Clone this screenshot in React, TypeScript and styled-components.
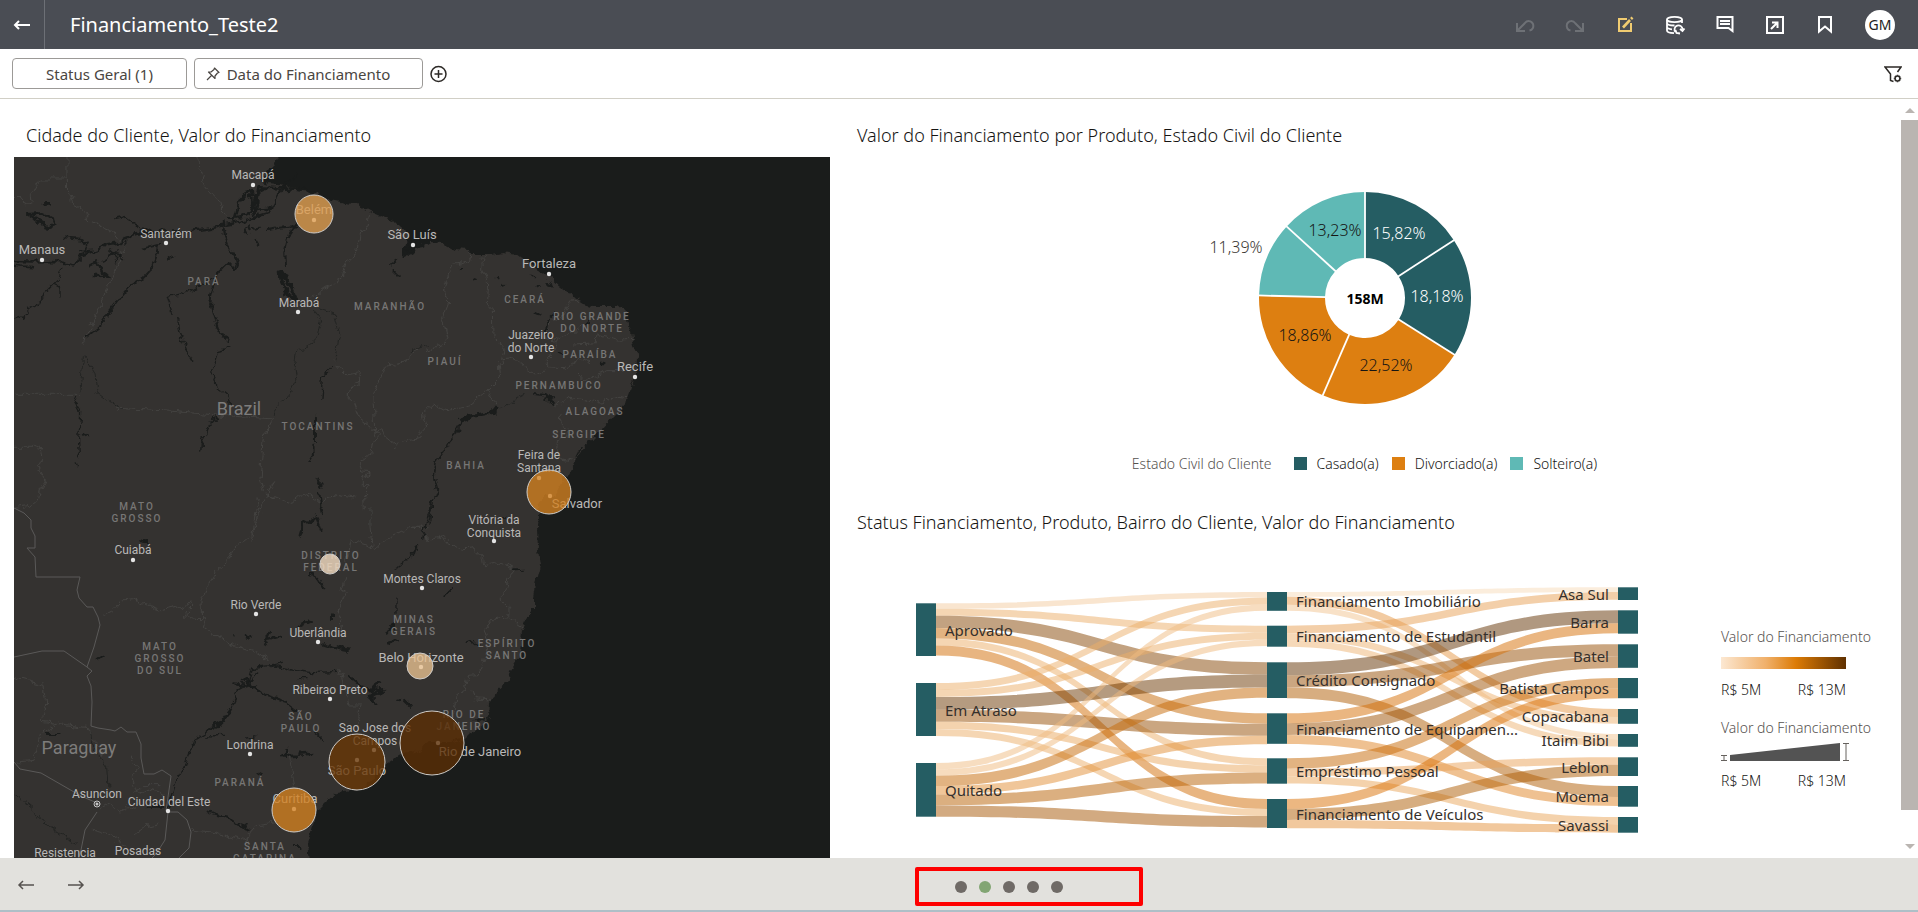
import React from "react";
import styled, { createGlobalStyle } from "styled-components";

const GlobalStyle = createGlobalStyle`
  * { box-sizing: border-box; }
  html, body, #root { height: 100%; }
  body {
    margin: 0;
    background: #fff;
    color: #161513;
    font-family: "Noto Sans", "Open Sans", sans-serif;
    font-size: 14px;
    font-weight: 300;
    overflow: hidden;
  }
  button { font: inherit; color: inherit; cursor: pointer; }
`;

const Page = styled.div`
  display: flex;
  flex-direction: column;
  height: 100vh;
  min-height: 600px;
`;

/* ---------- Header ---------- */

const Header = styled.header`
  display: flex;
  align-items: center;
  flex: none;
  height: 49px;
  padding-right: 23px;
  background: #4a4d54;
  color: #fff;
`;

const BackButton = styled.button`
  display: grid;
  place-items: center;
  width: 45px;
  height: 49px;
  padding: 0;
  border: 0;
  border-right: 1px solid #6d7076;
  background: none;
`;

const ProjectTitle = styled.h1`
  flex: 1;
  margin: 0;
  padding-left: 25px;
  font-size: 20px;
  font-weight: 400;
  line-height: 24px;
`;

const HeaderTools = styled.div`
  display: flex;
  align-items: center;
`;

const ToolButton = styled.button<{ $tone?: string }>`
  display: grid;
  place-items: center;
  width: 50px;
  height: 48px;
  padding: 0;
  border: 0;
  background: none;
  color: ${(p) => p.$tone ?? "#fff"};
`;

const Avatar = styled.button`
  width: 30px;
  height: 30px;
  margin-left: 15px;
  padding: 0;
  border: 0;
  border-radius: 50%;
  background: #fff;
  color: #222;
  font-size: 14px;
  font-weight: 400;
  line-height: 30px;
`;

/* ---------- Filter bar ---------- */

const FilterBar = styled.div`
  display: flex;
  align-items: center;
  flex: none;
  height: 50px;
  padding: 0 16px 0 12px;
  border-bottom: 1px solid #d1cfc6;
`;

const FilterChip = styled.button<{ $width: number }>`
  display: flex;
  align-items: center;
  justify-content: center;
  gap: 6px;
  width: ${(p) => p.$width}px;
  height: 31px;
  margin-right: 7px;
  padding: 0 22px 0 0;
  border: 1px solid #9c9a97;
  border-radius: 4px;
  background: #fff;
  color: #4a4642;
  font-size: 15px;
  font-weight: 400;
  line-height: 20px;
  &:first-child { padding-right: 0; }
`;

const IconButton = styled.button`
  display: grid;
  place-items: center;
  width: 18px;
  height: 24px;
  padding: 0;
  border: 0;
  background: none;
  color: #2c2926;
`;

const Spacer = styled.div`
  flex: 1;
`;

/* ---------- Canvas ---------- */

const Body = styled.main`
  display: flex;
  flex: 1;
  min-height: 0;
`;

const Canvas = styled.div`
  display: grid;
  flex: 1;
  grid-template-columns: 816fr 1015fr;
  gap: 27px;
  min-width: 0;
  padding: 25px 29px 0 14px;
  overflow: hidden;
`;

const Column = styled.div`
  display: flex;
  flex-direction: column;
  min-width: 0;
  min-height: 0;
`;

const CardTitle = styled.h2<{ $indent?: boolean }>`
  flex: none;
  margin: 0;
  padding: 0 0 2px ${(p) => (p.$indent ? 12 : 0)}px;
  font-size: 18px;
  font-weight: 300;
  line-height: 22px;
`;

const MapFrame = styled.div`
  flex: 1;
  min-height: 0;
  margin-top: 9px;
  background: #1a1c1b;
`;

const MapSvg = styled.svg`
  display: block;
  width: 100%;
  height: 100%;
`;

const CityText = styled.text<{ $large?: boolean }>`
  font-family: Roboto, sans-serif;
  font-size: ${(p) => (p.$large ? 13 : 12)}px;
  font-weight: 400;
  fill: #b9b8b7;
  text-anchor: middle;
`;

const StateText = styled.text`
  font-family: Roboto, sans-serif;
  font-size: 10px;
  font-weight: 500;
  letter-spacing: 2px;
  fill: #777675;
  text-anchor: middle;
`;

const CountryText = styled.text`
  font-family: Roboto, sans-serif;
  font-size: 18px;
  font-weight: 400;
  fill: #7d7c7b;
  text-anchor: middle;
`;

/* ---------- Donut ---------- */

const DonutSvg = styled.svg`
  display: block;
  flex: none;
  width: 100%;
  height: 300px;
`;

const SliceText = styled.text<{ $tone: string }>`
  font-size: 16px;
  fill: ${(p) => p.$tone};
  text-anchor: middle;
`;

const TotalText = styled.text`
  font-size: 14px;
  font-weight: 700;
  text-anchor: middle;
`;

const Legend = styled.div`
  display: flex;
  align-items: center;
  justify-content: center;
  gap: 13px;
  flex: none;
  height: 30px;
  margin-bottom: 33px;
  font-size: 14px;
`;

const LegendTitle = styled.span`
  margin-right: 9px;
  color: #56524f;
`;

const LegendItem = styled.span<{ $color: string }>`
  display: flex;
  align-items: center;
  gap: 10px;
  &::before {
    content: "";
    width: 13px;
    height: 13px;
    background: ${(p) => p.$color};
  }
`;

/* ---------- Sankey ---------- */

const SankeyRow = styled.div`
  display: flex;
  flex: 1;
  min-height: 0;
`;

const SankeySvg = styled.svg`
  flex: 1;
  min-width: 0;
  height: 323px;
`;

const NodeText = styled.text<{ $end?: boolean }>`
  font-size: 15px;
  font-weight: 400;
  fill: #35302c;
  text-anchor: ${(p) => (p.$end ? "end" : "start")};
`;

const Scales = styled.div`
  flex: none;
  width: 151px;
  padding-top: 92px;
  font-size: 14px;
  white-space: nowrap;
`;

const ScaleTitle = styled.div`
  height: 20px;
  color: #56524f;
  line-height: 20px;
`;

const ColorRamp = styled.div`
  width: 125px;
  height: 12px;
  margin: 10px 0 11px;
  background: linear-gradient(to right, #fce8d2, #f0b06a 36%, #dc7b05 60%, #5f3000);
`;

const SizeRamp = styled.svg`
  display: block;
  width: 129px;
  height: 18px;
  margin: 5px 0 10px;
`;

const ScaleEnds = styled.div`
  display: flex;
  justify-content: space-between;
  width: 125px;
  height: 20px;
  margin-bottom: 18px;
  line-height: 20px;
`;

/* ---------- Scrollbar ---------- */

const Scrollbar = styled.div`
  display: flex;
  flex-direction: column;
  align-items: center;
  flex: none;
  width: 17px;
  padding: 9px 0;
`;

const ScrollThumb = styled.div`
  flex: 1;
  width: 17px;
  margin: 7px 0 34px;
  background: #bab5b1;
`;

const ScrollArrow = styled.span<{ $down?: boolean }>`
  border: 5px solid transparent;
  border-${(p) => (p.$down ? "bottom" : "top")}-width: 0;
  border-${(p) => (p.$down ? "top" : "bottom")}-color: #bab5b1;
`;

/* ---------- Footer ---------- */

const Footer = styled.footer`
  display: grid;
  grid-template-columns: 915fr 228px 775fr;
  align-items: center;
  flex: none;
  height: 54px;
  background: #e2e1dd;
  border-bottom: 2px solid #aebfc7;
`;

const StepButtons = styled.div`
  display: flex;
  padding: 2px 0 0 9px;
`;

const StepButton = styled.button`
  display: grid;
  place-items: center;
  width: 34px;
  height: 34px;
  margin-right: 16px;
  padding: 0;
  border: 0;
  background: none;
  color: #56524f;
`;

const CanvasDots = styled.nav`
  display: flex;
  align-items: center;
  gap: 12px;
  height: 39px;
  margin-top: 4px;
  padding: 2px 0 0 36px;
  border: 4px solid #fe0000;
  border-radius: 2px;
`;

const Dot = styled.button<{ $active?: boolean }>`
  width: 12px;
  height: 12px;
  padding: 0;
  border: 0;
  border-radius: 50%;
  background: ${(p) => (p.$active ? "#82a573" : "#6f6a66")};
`;

/* ---------- Icons ---------- */

type IconProps = { size?: number; sw?: number; children: React.ReactNode };

const Icon = ({ size = 24, sw = 2, children }: IconProps) => (
  <svg width={size} height={size} viewBox={`0 0 ${size} ${size}`} fill="none" stroke="currentColor" strokeWidth={sw} aria-hidden="true">
    {children}
  </svg>
);

const ArrowLeft = ({ sw = 2 }: { sw?: number }) => (
  <Icon size={18} sw={sw}>
    <path d="M17 9H2M6 5L2 9l4 4" />
  </Icon>
);

const ArrowRight = ({ sw = 2 }: { sw?: number }) => (
  <Icon size={18} sw={sw}>
    <path d="M1 9h15M12 5l4 4-4 4" />
  </Icon>
);

/* ---------- Map data ---------- */

type Place = { lines: string[]; x: number; y: number; large?: boolean; dot?: [number, number] };

const cities: Place[] = [
  { lines: ["Macapá"], x: 253, y: 179, dot: [253, 185] },
  { lines: ["Manaus"], x: 42, y: 254, large: true, dot: [42, 260] },
  { lines: ["Santarém"], x: 166, y: 238, dot: [166, 243] },
  { lines: ["Belém"], x: 314, y: 214, large: true, dot: [314, 220] },
  { lines: ["Marabá"], x: 299, y: 307, dot: [298, 312] },
  { lines: ["São Luís"], x: 412, y: 239, large: true, dot: [413, 245] },
  { lines: ["Fortaleza"], x: 549, y: 268, large: true, dot: [549, 274] },
  { lines: ["Juazeiro", "do Norte"], x: 531, y: 339, dot: [531, 357] },
  { lines: ["Recife"], x: 635, y: 371, large: true, dot: [635, 377] },
  { lines: ["Feira de", "Santana"], x: 539, y: 459, dot: [539, 478] },
  { lines: ["Salvador"], x: 577, y: 508, large: true, dot: [550, 496] },
  { lines: ["Vitória da", "Conquista"], x: 494, y: 524, dot: [494, 541] },
  { lines: ["Montes Claros"], x: 422, y: 583, dot: [422, 588] },
  { lines: ["Belo Horizonte"], x: 421, y: 662, large: true, dot: [421, 667] },
  { lines: ["Rio de Janeiro"], x: 480, y: 756, large: true, dot: [438, 743] },
  { lines: ["Cuiabá"], x: 133, y: 554, dot: [133, 560] },
  { lines: ["Rio Verde"], x: 256, y: 609, dot: [256, 614] },
  { lines: ["Uberlândia"], x: 318, y: 637, dot: [318, 642] },
  { lines: ["Ribeirao Preto"], x: 330, y: 694, dot: [330, 699] },
  { lines: ["Sao Jose dos", "Campos"], x: 375, y: 732, dot: [374, 750] },
  { lines: ["São Paulo"], x: 357, y: 775, large: true, dot: [357, 760] },
  { lines: ["Londrina"], x: 250, y: 749, dot: [250, 754] },
  { lines: ["Curitiba"], x: 295, y: 803, large: true, dot: [294, 809] },
  { lines: ["Asuncion"], x: 97, y: 798 },
  { lines: ["Ciudad del Este"], x: 169, y: 806, dot: [168, 811] },
  { lines: ["Resistencia"], x: 65, y: 857 },
  { lines: ["Posadas"], x: 138, y: 855 },
];

const states: Place[] = [
  { lines: ["PARÁ"], x: 204, y: 285 },
  { lines: ["MARANHÃO"], x: 390, y: 310 },
  { lines: ["CEARÁ"], x: 525, y: 303 },
  { lines: ["RIO GRANDE", "DO NORTE"], x: 592, y: 320 },
  { lines: ["PARAÍBA"], x: 590, y: 358 },
  { lines: ["PIAUÍ"], x: 445, y: 365 },
  { lines: ["PERNAMBUCO"], x: 559, y: 389 },
  { lines: ["ALAGOAS"], x: 595, y: 415 },
  { lines: ["SERGIPE"], x: 579, y: 438 },
  { lines: ["TOCANTINS"], x: 318, y: 430 },
  { lines: ["BAHIA"], x: 466, y: 469 },
  { lines: ["MATO", "GROSSO"], x: 137, y: 510 },
  { lines: ["MATO", "GROSSO", "DO SUL"], x: 160, y: 650 },
  { lines: ["DISTRITO", "FEDERAL"], x: 331, y: 559 },
  { lines: ["MINAS", "GERAIS"], x: 414, y: 623 },
  { lines: ["ESPÍRITO", "SANTO"], x: 507, y: 647 },
  { lines: ["SÃO", "PAULO"], x: 301, y: 720 },
  { lines: ["RIO DE", "JANEIRO"], x: 464, y: 718 },
  { lines: ["PARANÁ"], x: 240, y: 786 },
  { lines: ["SANTA", "CATARINA"], x: 265, y: 850 },
];

const bubbles = [
  { x: 314, y: 214, r: 19, color: "#e19f50" },
  { x: 549, y: 492, r: 22, color: "#d58120" },
  { x: 330, y: 564, r: 10, color: "#fae2c7" },
  { x: 420, y: 666, r: 13, color: "#ebc392" },
  { x: 432, y: 743, r: 32, color: "#5c2e04" },
  { x: 357, y: 762, r: 28, color: "#6a3705" },
  { x: 294, y: 810, r: 22, color: "#d58120" },
];

const LAND =
  "M0 140H290L278 157 275 165 268 172 262 182 268 184 285 186 300 190 315 193 330 200 345 203 357 205 368 211 380 216 393 220 402 229 409 234 404 246 404 256 410 254 414 248 424 246 430 242 442 243 453 249 470 250 473 254 490 254 503 252 517 254 525 260 538 268 549 277 560 287 578 299 582 303 592 306 617 306 623 308 627 317 631 332 633 342 637 357 636 370 633 383 628 397 620 410 612 418 603 428 593 437 585 447 577 458 567 477 561 486 553 498 546 496 540 503 538 515 537 527 538 550 540 565 536 580 533 597 533 612 525 622 521 632 520 643 518 658 510 670 507 682 496 692 490 702 489 718 482 727 470 733 463 740 450 742 430 742 415 752 400 755 387 763 377 775 360 789 337 792 325 802 315 812 313 825 308 843 312 880H0Z";

/* Line work is drawn in four map tiles at three units per pixel. */
const tiles = [
  {
    at: "translate(0 150) scale(.3333)",
    borders: [
      "M42 142l12 1 20 22 20-8-3-20 28-50h82v-66M202 87l1 40 13 20 2 14 30 22 8 4 10 22 40 20 35 14 15 24 14 14 7 14-130 288M590 21l3 20 20 30-5 24 20 26 30 32 5 18 25 26M1108 190l-3 40-22 15-14 60-32 40-10 36-30 25-25 8-40 30M42 733H235M40 892l60 0 25 8 3 25-14 30 24 38-20 30-6 28-20 18-52 6M350 775l150 8 150 12 170 12-30 60-10 120 12 40 20 12 60 25 40-35 50 30 40-25 60 10M1000 630l40 45 40-8 2 30-30 10-5 38 15 14 20 50 45 35 15 10-20 24-6 30-40 30 10 28 24 2-20 12v30l18 0-14 25 2 45M1125 855l-6-115 35-90 70-18 26-34M1125 855l20-25 10 30 34 28 36-20 36-5M780 1080l20-45 24-40-14 16",
    ],
    rivers: [
      { d: "M0 325l40 8 60 2 60-2 60 10 22-10 0-16 50-16 20-14 40-6 20-16 40-14 45-1 30-14 20 12 50-3 70-10 40-8 40-8 50-16 50-14 35-60 20-34 24-24", w: 7 },
      { d: "M0 340l60 8 40 2M195 265l42 4 24 14-6 22M330 300l24 20-10 18M310 330l42-24 18 24M240 305l40-4M345 205l26-6 34 24 16 20 60 4M370 282l20-24 30-12M520 320l-14 6M430 295l60-14", w: 5 },
      { d: "M690 206l60-14 16-40 10-40 80 4 90 10M700 212l14-50 34-44M752 118l12 74M775 130l-8 60M767 180l50-4M745 142l46-22", w: 8 },
      { d: "M474 282l-6 40-14 36-26 28-40 24-30 34-30 40-24 42-34 26-12 10", w: 6 },
      { d: "M668 216l8 44 12 36 28 34-12 30-22-22-26 26-16 44-10 50 10 36 14 40 28 42", w: 6 },
      { d: "M650 382l-50 24-50 28-48 8 14 46M530 510l8 40 22 50 18 32M690 594l-36 8-18 60 12 44M652 712l32 26 4 22M650 798l-22 28-8 26-16 30-2 24", w: 4 },
      { d: "M890 222l-24 36-10 44 2 52M800 240l36-6 50-6M734 250l-4-14 18-10 4 18M760 240l18-4M764 266l14 22", w: 6 },
      { d: "M842 370l20 10 4 20 10 16 12 30-24-12-16-32z", w: 12 },
      { d: "M188 355l-10 30-36 36-20 34-34 18-16 28-30 6M160 402l20 10v26", w: 4 },
      { d: "M85 192l44-2 26 14 8 20-20 8-24-16zM268 346l26-12 14 34 14 8-34 2M132 160l16 0", w: 8 },
      { d: "M255 618l30 50 6 60 40 30 36 20M250 620l-10 100", w: 2 },
      { d: "M230 740l-8 20 20 30-6 80 2 50M244 852l20 14M232 930l4 26", w: 4 },
      { d: "M998 650l-28 30-4 66", w: 4 },
      { d: "M945 800v78M940 890l2 24-14 20M955 980l10 34M950 985l18 20M958 1030l8 50", w: 6 },
      { d: "M940 480l22 30-10 50-26 32-34 6-10 54 6 40-20 40-40 50-5 24M965 480l38 14 14 50-12 80", w: 2 },
      { d: "M1230 270l-16 48 24-12 10-30M1188 330l-16 14M1178 360l18 18", w: 7 },
    ],
  },
  {
    at: "translate(410 150) scale(.3333)",
    borders: [
      "M183 304l-4 30-54 14-24 58 12 50-18 48 16 60-10 22-54 16M220 320l-5 34 18 46-4 60 18 20 2 80 34 30-8 36 30-2 30 16 42 34 22-14M280 630l-12 16 4 36-40 40 26 50M230 724l-50 40-66 18-50-14-24 24 10 36-36 36M510 450l-30 4-28 54-36 4-8 50 30 12-6 30-24 28 10 22 46 2 46-28 26 10M440 570l50-20 24-26M490 582l72-4 2-22 60 14 46-2M505 670l22 26 60-34 40 0 30-12M440 770l34-28 96 14 54-20 30 4M450 790l4 34 20 8-4 30-28 10-2 40 18 16 34 6",
    ],
    rivers: [
      { d: "M254 770l-14 18-40 6-40 8-14 24-8 30-20 24-20 30-20 30-6 40 10 36-14 40-4 40-4 20", w: 5 },
      { d: "M258 776l-10 10-60 12-36 10", w: 11 },
      { d: "M375 732l30 4 30 30M400 745l30 0M436 490l-24 20-6 46", w: 6 },
      { d: "M380 486l8 4M366 380l6 4M410 400l14 6M276 410l6-2M194 390l8 2M264 384l4 4M450 610l12 2M576 642l10 0M530 520l6-4M510 895l-10 20M150 354l6-2M380 405l4 2", w: 7 },
      { d: "M0 608l24-18 34-6M270 776l30-20 40-20", w: 2 },
    ],
  },
  {
    at: "translate(0 500) scale(.3333)",
    borders: [
      "M305 348l30-14 30-34 36-4 50 24 28 10 54-12 20 8 20-24-2 26-18 22 16 6 48 4-8 22 32 22 60 30 70 22 34 20M605 355l-2-50 16-40 30-50 40-35 20-40 46-36 20-110M780 20l-16 60-8 44M1035 230l-12 40 14 6-26 60 12 30-8 34M1040 190l14-70 50 14 20 14 40-34 60-30 60-4M1110 20l0 60 6 60M1020 508l24 110 36 0-6 60M865 750l10 60 10 50M42 532l90 24 8 50-14 58 140 20 6 20M270 710l40 40-10 24M170 672l-48 30-20 76-56 6M390 770l22 34-18 26 20 56 38-18 40 12M480 854l-50 0-26 28M575 990l60 6 100 26 40-46 60-8M745 1000l-4 30M300 930l30-20 30 30 20-20 30 10M280 990l60 20 40 30M400 1010l40-30 40-10",
    ],
    rivers: [
      { d: "M900 106l10-34 40-20 14 40M420 122l20 4", w: 8 },
      { d: "M962 20l4 20M996 340v20M930 224l24 12 22 30M896 380l40-20", w: 6 },
      { d: "M700 406v2M738 410l14 4M794 430l16-34M806 416l34-8M970 430l36 12 40 8", w: 7 },
      { d: "M1160 400l20-30M1162 430l30-10", w: 8 },
      { d: "M1250 145l-30 40-32 22M1188 300v40", w: 4 },
      { d: "M700 550l30 4 34 8 40 30 50 14 38 30M740 560l16-58", w: 6 },
      { d: "M756 502l60-6 60 14 60 8 80-4M810 500l40-10M895 536l20 0M770 516l-30 40", w: 4 },
      { d: "M730 540l50 35M1048 530l40 34 60 8-40 20 20 20M1110 570l26-22M1120 560v46", w: 9 },
      { d: "M1190 600l10 2M1220 606l10 10", w: 9 },
      { d: "M622 690l40-20 30-40", w: 9 },
      { d: "M690 630l36-80M622 694l-40 30-30 80-26 50-14 46-8 30M740 714l30-4M620 708l60-2M940 694l30 26", w: 4 },
      { d: "M850 766l80-4M860 750v24M900 758l8 14", w: 8 },
      { d: "M620 938l32 8 36 8 30 20 36 12M140 702l36 0M440 920l50 0M290 480l18-14M775 822l10 4M884 1044l18 0", w: 6 },
      { d: "M42 880l60 50 40 50 50 30 40 24M270 690l10 50 40 60 4 60", w: 2 },
    ],
  },
  {
    at: "translate(410 500) scale(.3333)",
    borders: [
      "M0 80l40 4 8 36 36-10 36 20 44 16 24-2 30 30 2 20 40-8 60 20-26 34-10 30-14 28 30 28 0 24-50 6-24 30 10 40-16 60-16 38-30 2-8 40-24 20-8 50M300 354l36 26M186 570l6 26 50 4",
    ],
    rivers: [
      { d: "M68 0l-2 30-18 40-10 50M20 140l-10 30", w: 4 },
      { d: "M318 208l22-2M100 292l20-22M170 428l14-6 22 16M200 658l20 4M275 50l12 2", w: 6 },
    ],
  },
];

/* International frontiers are lighter than the state borders. */
const FRONTIER =
  "M14 508l10 5 7 7 0 8 4 8v12h-8l8 9 1 20h44l-3 13 2 8 8 9 6 0 5 10 2 8-6 22-7 20 5 4-5 5 4 10 1 16-1 24 7 2 13 2 4 1 6-4 6 5h9l5 12 0 14 3 16h10l8-4 9 6-5 35 M14 657l28-6h22l23 16 M14 762l6 7 21 4 40 23 16 7M97 812l-12 18-4 20-4 14M168 812l-3 28-9 14-6 6M168 812l10 0 9 8 4 12-2 16-12 12";

const MapLabel = ({ place, step, as: Text }: { place: Place; step: number; as: React.ElementType }) => (
  <>
    {place.lines.map((line, i) => (
      <Text key={line} x={place.x} y={place.y + i * step} $large={place.large}>
        {line}
      </Text>
    ))}
  </>
);

const BrazilMap = () => (
  <MapSvg viewBox="14 157 816 701" preserveAspectRatio="xMinYMin slice" role="img" aria-label="Mapa de Valor do Financiamento por Cidade do Cliente">
    <defs>
      {/* Breaks straight segments into natural-looking meanders. */}
      <filter id="meander" filterUnits="userSpaceOnUse" x="0" y="140" width="840" height="740" colorInterpolationFilters="sRGB">
        <feTurbulence type="fractalNoise" baseFrequency="0.12" numOctaves={3} seed={4} />
        <feDisplacementMap in="SourceGraphic" scale={9} xChannelSelector="R" yChannelSelector="G" />
      </filter>
    </defs>
    <g filter="url(#meander)">
      <path d={LAND} fill="#343230" />
      {tiles.map((tile) => (
        <g key={tile.at} transform={tile.at} fill="none" strokeLinejoin="round" strokeLinecap="round">
          {tile.borders.map((d) => (
            <path key={d} d={d} stroke="#434240" strokeWidth={3} />
          ))}
          {tile.rivers.map(({ d, w }) => (
            <path key={d} d={d} stroke="#1a1c1b" strokeWidth={w} />
          ))}
        </g>
      ))}
    </g>
    <path d={FRONTIER} fill="none" stroke="#5a5958" strokeLinejoin="round" />
    <CountryText x={239} y={415}>Brazil</CountryText>
    <CountryText x={79} y={754}>Paraguay</CountryText>
    {states.map((s) => (
      <MapLabel key={s.lines.join() + s.y} place={s} step={12} as={StateText} />
    ))}
    {cities.map((c) => (
      <g key={c.lines[0]}>
        <MapLabel place={c} step={13} as={CityText} />
        {c.dot && <circle cx={c.dot[0]} cy={c.dot[1]} r={2.2} fill="#e4e4e4" />}
      </g>
    ))}
    <circle cx={97} cy={804} r={3} fill="none" stroke="#c4c4c4" />
    <circle cx={97} cy={804} r={1.5} fill="#c4c4c4" />
    {bubbles.map((b) => (
      <circle key={`${b.x}-${b.y}`} cx={b.x} cy={b.y} r={b.r} fill={b.color} fillOpacity={0.78} stroke="#cfccc8" />
    ))}
  </MapSvg>
);

/* ---------- Donut data ---------- */

const TEAL = "#255d63";
const ORANGE = "#dd7f11";
const AQUA = "#5fb9b5";

const slices = [
  { value: 15.82, color: TEAL, x: 34, y: -59, tone: "#fff", label: "15,82%" },
  { value: 18.18, color: TEAL, x: 72, y: 4, tone: "#fff", label: "18,18%" },
  { value: 22.52, color: ORANGE, x: 21, y: 73, tone: "#161513", label: "22,52%" },
  { value: 18.86, color: ORANGE, x: -60, y: 43, tone: "#161513", label: "18,86%" },
  { value: 11.39, color: AQUA, x: -129, y: -45, tone: "#3a3632", label: "11,39%" },
  { value: 13.23, color: AQUA, x: -30, y: -62, tone: "#161513", label: "13,23%" },
];

const startOf = (i: number) => slices.slice(0, i).reduce((sum, s) => sum + s.value, 0);

const point = (pct: number, r: number) => {
  const a = (pct / 100) * Math.PI * 2;
  return `${(Math.sin(a) * r).toFixed(2)} ${(-Math.cos(a) * r).toFixed(2)}`;
};

const Donut = () => {
  const R = 106;
  const r = 40;
  return (
    <DonutSvg viewBox="-508 -150 1015 300" role="img" aria-label="Valor do Financiamento por Estado Civil do Cliente">
      {slices.map((s, i) => {
        const from = startOf(i);
        const to = from + s.value;
        return (
          <path
            key={s.label}
            d={`M${point(from, R)}A${R} ${R} 0 0 1 ${point(to, R)}L${point(to, r)}A${r} ${r} 0 0 0 ${point(from, r)}Z`}
            fill={s.color}
          />
        );
      })}
      {slices.map((s, i) => (
        <path key={s.label} d={`M${point(startOf(i), r - 1)}L${point(startOf(i), R + 1)}`} stroke="#fff" strokeWidth={1.8} />
      ))}
      {slices.map((s) => (
        <SliceText key={s.label} x={s.x} y={s.y} $tone={s.tone}>
          {s.label}
        </SliceText>
      ))}
      <TotalText x={0} y={6}>158M</TotalText>
    </DonutSvg>
  );
};

/* ---------- Sankey data ---------- */

type SankeyNode = { name: string; y: number; h: number };

const statuses: SankeyNode[] = [
  { name: "Aprovado", y: 603.3, h: 52.7 },
  { name: "Em Atraso", y: 683, h: 53 },
  { name: "Quitado", y: 763, h: 53.7 },
];

const products: SankeyNode[] = [
  { name: "Financiamento Imobiliário", y: 592, h: 18.8 },
  { name: "Financiamento de Estudantil", y: 625.7, h: 21 },
  { name: "Crédito Consignado", y: 662.3, h: 35.7 },
  { name: "Financiamento de Equipamen...", y: 713.3, h: 30.5 },
  { name: "Empréstimo Pessoal", y: 758.3, h: 25.4 },
  { name: "Financiamento de Veículos", y: 799, h: 29 },
];

const districts: SankeyNode[] = [
  { name: "Asa Sul", y: 587.3, h: 12.7 },
  { name: "Barra", y: 610.3, h: 23.4 },
  { name: "Batel", y: 644.3, h: 23.5 },
  { name: "Batista Campos", y: 678, h: 20.2 },
  { name: "Copacabana", y: 709, h: 14.8 },
  { name: "Itaim Bibi", y: 734, h: 12.8 },
  { name: "Leblon", y: 757.3, h: 18.7 },
  { name: "Moema", y: 786, h: 20.7 },
  { name: "Savassi", y: 817, h: 15.7 },
];

/* [source, target, value in millions] */
type Flow = [number, number, number];

const statusFlows: Flow[] = [
  [0, 0, 5.5], [0, 1, 7], [0, 2, 12.3], [0, 3, 10.4], [0, 4, 7], [0, 5, 10.1],
  [1, 0, 7], [1, 1, 7], [1, 2, 12.8], [1, 3, 12], [1, 4, 7.3], [1, 5, 7],
  [2, 0, 6.3], [2, 1, 6.4], [2, 2, 10.4], [2, 3, 8.5], [2, 4, 10.8], [2, 5, 11.4],
];

const districtFlows: Flow[] = [
  [0, 0, 4.8], [0, 4, 8], [0, 5, 5.9],
  [1, 0, 7.6], [1, 4, 6.8], [1, 5, 6.7],
  [2, 1, 13], [2, 2, 12], [2, 7, 11],
  [3, 1, 10], [3, 2, 11.7], [3, 7, 9],
  [4, 3, 10.4], [4, 6, 7.5], [4, 8, 7.4],
  [5, 3, 9.9], [5, 6, 11.1], [5, 8, 8.3],
];

const stops: [number, number[]][] = [
  [4.6, [249, 223, 192]],
  [7, [236, 173, 104]],
  [9.9, [217, 112, 4]],
  [11, [176, 92, 2]],
  [12, [150, 78, 4]],
  [13, [97, 49, 1]],
];

const flowColor = (v: number) => {
  const i = Math.max(1, stops.findIndex(([at]) => at >= v));
  const [a, ca] = stops[i - 1];
  const [b, cb] = stops[i];
  const t = (v - a) / (b - a);
  return `rgb(${ca.map((c, k) => Math.round(c + (cb[k] - c) * t)).join(",")})`;
};

const Flows = ({ from, to, flows, x0, x1 }: { from: SankeyNode[]; to: SankeyNode[]; flows: Flow[]; x0: number; x1: number }) => {
  const out = from.map((n) => n.y);
  const into = to.map((n) => n.y);
  const mid = (x0 + x1) / 2;
  return (
    <g>
      {flows.map(([s, t, v]) => {
        const a = out[s];
        const b = into[t];
        out[s] += v;
        into[t] += v;
        return (
          <path
            key={`${s}-${t}`}
            d={`M${x0} ${a}C${mid} ${a} ${mid} ${b} ${x1} ${b}V${b + v}C${mid} ${b + v} ${mid} ${a + v} ${x0} ${a + v}Z`}
            fill={flowColor(v)}
            fillOpacity={0.5}
          />
        );
      })}
    </g>
  );
};

const Nodes = ({ nodes, x, end }: { nodes: SankeyNode[]; x: number; end?: boolean }) => (
  <g>
    {nodes.map((n) => (
      <g key={n.name}>
        <rect x={x} y={n.y} width={20} height={n.h} fill={TEAL} />
        <NodeText x={end ? x - 9 : x + 29} y={n.y + n.h / 2 + 6} $end={end}>
          {n.name}
        </NodeText>
      </g>
    ))}
  </g>
);

const Sankey = () => (
  <SankeySvg viewBox="857 535 864 323" preserveAspectRatio="xMinYMin meet" role="img" aria-label="Fluxo de Status Financiamento, Produto e Bairro do Cliente">
    <Flows from={statuses} to={products} flows={statusFlows} x0={936} x1={1267} />
    <Flows from={products} to={districts} flows={districtFlows} x0={1287} x1={1618} />
    <Nodes nodes={statuses} x={916} />
    <Nodes nodes={products} x={1267} />
    <Nodes nodes={districts} x={1618} end />
  </SankeySvg>
);

/* ---------- Page ---------- */

export default function App() {
  return (
    <Page>
      <GlobalStyle />
      <Header>
        <BackButton aria-label="Voltar">
          <ArrowLeft />
        </BackButton>
        <ProjectTitle>Financiamento_Teste2</ProjectTitle>
        <HeaderTools>
          <ToolButton aria-label="Desfazer" $tone="#6e7176">
            <Icon>
              <path d="M4 10v8h8M4.500 17.500l7-7C14 7 18.500 7.500 20 11c1 3-.5 6-3.500 6.500" />
            </Icon>
          </ToolButton>
          <ToolButton aria-label="Refazer" $tone="#6e7176">
            <Icon>
              <path d="M20 10v8h-8M19.500 17.500l-7-7C10 7 5.500 7.500 4 11c-1 3 .5 6 3.500 6.500" />
            </Icon>
          </ToolButton>
          <ToolButton aria-label="Editar" $tone="#f0cc71">
            <Icon>
              <path d="M14 6H6v12h12v-8" />
              <path d="M10 14.500L17 7" strokeWidth={2.6} />
              <path d="M18 6l1.500-1.500" strokeWidth={2.6} />
            </Icon>
          </ToolButton>
          <ToolButton aria-label="Atualizar dados">
            <Icon sw={1.8}>
              <ellipse cx="11.500" cy="6.500" rx="7.500" ry="2.600" />
              <path d="M4 6.500v11c0 1.500 3 2.500 7 2.700M19 6.500V10M4 10c0 1.500 3 2.500 7.500 2.500M4 14c0 1.300 2 2 5 2.400" />
              <path d="M12.500 19a4 4 0 1 1 7-2.500M17 16l2.500 2 2-2.500M12.500 17l1 3 3.500.5" />
            </Icon>
          </ToolButton>
          <ToolButton aria-label="Comentários">
            <Icon>
              <path d="M4.500 4h15v14l-4-3h-11zM7 8h10M7 11h10" />
            </Icon>
          </ToolButton>
          <ToolButton aria-label="Exportar">
            <Icon>
              <path d="M4 4h16v16H4zM8 16l6-6M9 9.500h5.500V15" />
            </Icon>
          </ToolButton>
          <ToolButton aria-label="Marcador">
            <Icon>
              <path d="M6 4h12v14.500l-6-5-6 5z" />
            </Icon>
          </ToolButton>
          <Avatar aria-label="Perfil GM">GM</Avatar>
        </HeaderTools>
      </Header>

      <FilterBar>
        <FilterChip $width={175}>Status Geral (1)</FilterChip>
        <FilterChip $width={229}>
          <Icon size={16} sw={1.2}>
            <path d="M9.500 2l4.500 4.500-1.500.5-2.500 3v2.500L3.500 6H6l3-2.500zM6.500 9.500L2 14" strokeLinejoin="round" />
          </Icon>
          Data do Financiamento
        </FilterChip>
        <IconButton aria-label="Adicionar filtro">
          <Icon size={18} sw={1.5}>
            <circle cx="8.500" cy="9" r="7.500" />
            <path d="M8.500 5v8M4.500 9h8" />
          </Icon>
        </IconButton>
        <Spacer />
        <IconButton aria-label="Opções de filtro">
          <Icon size={18} sw={1.5}>
            <path d="M13.500 7l3.500-5H1l5.500 7v6.500l3 1" />
            <circle cx="13.500" cy="13.500" r="2.400" />
            <path d="M13.500 9.800v1M13.500 16.200v1M9.800 13.500h1M16.200 13.500h1M11 11l.7.7M15.300 15.300l.7.7M11 16l.7-.7M15.300 11.700l.7-.7" />
          </Icon>
        </IconButton>
      </FilterBar>

      <Body>
        <Canvas>
          <Column>
            <CardTitle $indent>Cidade do Cliente, Valor do Financiamento</CardTitle>
            <MapFrame>
              <BrazilMap />
            </MapFrame>
          </Column>
          <Column>
            <CardTitle>Valor do Financiamento por Produto, Estado Civil do Cliente</CardTitle>
            <Donut />
            <Legend>
              <LegendTitle>Estado Civil do Cliente</LegendTitle>
              <LegendItem $color={TEAL}>Casado(a)</LegendItem>
              <LegendItem $color={ORANGE}>Divorciado(a)</LegendItem>
              <LegendItem $color={AQUA}>Solteiro(a)</LegendItem>
            </Legend>
            <CardTitle>Status Financiamento, Produto, Bairro do Cliente, Valor do Financiamento</CardTitle>
            <SankeyRow>
              <Sankey />
              <Scales>
                <ScaleTitle>Valor do Financiamento</ScaleTitle>
                <ColorRamp />
                <ScaleEnds>
                  <span>R$ 5M</span>
                  <span>R$ 13M</span>
                </ScaleEnds>
                <ScaleTitle>Valor do Financiamento</ScaleTitle>
                <SizeRamp viewBox="0 0 129 18" aria-hidden="true">
                  <path d="M9 12L119 0V18H9z" fill="#535353" />
                  <path d="M0 12.500h6M0 17.500h6M3 12v6M122 .5h6M122 17.500h6M125 0v18" stroke="#66625f" fill="none" />
                </SizeRamp>
                <ScaleEnds>
                  <span>R$ 5M</span>
                  <span>R$ 13M</span>
                </ScaleEnds>
              </Scales>
            </SankeyRow>
          </Column>
        </Canvas>
        <Scrollbar aria-hidden="true">
          <ScrollArrow />
          <ScrollThumb />
          <ScrollArrow $down />
        </Scrollbar>
      </Body>

      <Footer>
        <StepButtons>
          <StepButton aria-label="Tela anterior">
            <ArrowLeft sw={1.5} />
          </StepButton>
          <StepButton aria-label="Próxima tela">
            <ArrowRight sw={1.5} />
          </StepButton>
        </StepButtons>
        <CanvasDots aria-label="Telas">
          {[1, 2, 3, 4, 5].map((n) => (
            <Dot key={n} $active={n === 2} aria-label={`Tela ${n}`} aria-current={n === 2 ? "page" : undefined} />
          ))}
        </CanvasDots>
      </Footer>
    </Page>
  );
}
